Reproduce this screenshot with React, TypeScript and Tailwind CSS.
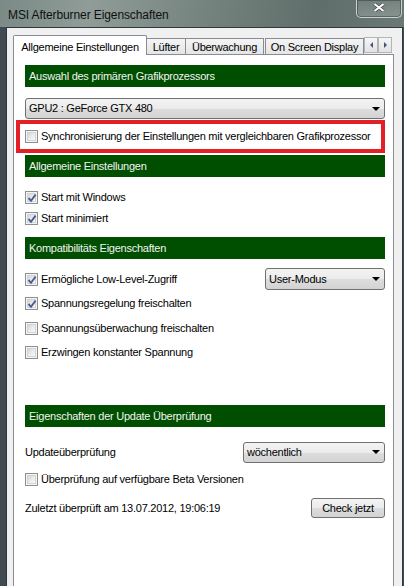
const font = "font-['Liberation_Sans',Arial,sans-serif]";

function Check({ checked = false }: { checked?: boolean }) {
  return (
    <span className="relative flex h-[13px] w-[13px] shrink-0 items-center justify-center border border-[#8e8f8f] bg-[#f4f4f4]">
      <span className="h-[9px] w-[9px] border border-[#d4d4d4] bg-[linear-gradient(135deg,#d2d5da_0%,#e9eaec_50%,#fbfbfb_100%)]" />
      {checked && (
        <svg className="absolute left-[1px] top-[1px]" width="10" height="10" viewBox="0 0 10 10" aria-hidden="true">
          <path d="M1.5 5 L4 7.8 L8.6 1.6" fill="none" stroke="#4a5e94" strokeWidth="1.9" />
        </svg>
      )}
    </span>
  );
}

function Header({ children, className = "" }: { children: string; className?: string }) {
  return (
    <div className={`flex h-[22px] items-center bg-[#004f00] pl-[4px] text-[#f2f4f2] ${className}`}>
      {children}
    </div>
  );
}

function Select({ value, className = "" }: { value: string; className?: string }) {
  return (
    <div
      className={`flex h-[21px] items-center justify-between rounded-[3px] border border-[#707070] bg-[linear-gradient(to_bottom,#f3f3f3_0%,#ebebeb_50%,#dddddd_51%,#d3d3d3_100%)] pl-[3px] pr-[4px] ${className}`}
    >
      <span>{value}</span>
      <svg width="8" height="4" viewBox="0 0 8 4" aria-hidden="true">
        <path d="M0 0 H8 L4 4 Z" fill="#000" />
      </svg>
    </div>
  );
}

function CheckRow({ label, checked, className = "" }: { label: string; checked?: boolean; className?: string }) {
  return (
    <div className={`flex h-[20px] items-center gap-[3px] ${className}`}>
      <Check checked={checked} />
      <span>{label}</span>
    </div>
  );
}

export default function App() {
  return (
    <div className={`${font} flex h-[586px] w-[404px] flex-col overflow-hidden bg-[#3f4a52] text-[11px] tracking-[-0.25px] text-black`}>
      <div className="flex h-[27px] shrink-0 items-start justify-between bg-[linear-gradient(100deg,#7b8a86_0%,#8f9c98_22%,#76847f_50%,#5f6e6a_78%,#6b7975_100%)] pl-[8px] pr-[2px]">
        <span className="mt-[6px] text-[12px] tracking-[-0.1px] text-[#101010]">MSI Afterburner Eigenschaften</span>
        <div className="flex h-[18px] w-[46px] items-start justify-center rounded-b-[5px] border border-t-0 border-[#c9d0ce] bg-[linear-gradient(to_bottom,rgba(255,255,255,0.08),rgba(255,255,255,0.2))] pt-[3px] shadow-[inset_0_0_0_1px_rgba(40,50,50,0.45)]">
          <svg width="12" height="9" viewBox="0 0 12 9" aria-hidden="true">
            <path d="M1.5 1 L10.5 8 M10.5 1 L1.5 8" stroke="#3a4444" strokeWidth="3.4" />
            <path d="M1.5 1 L10.5 8 M10.5 1 L1.5 8" stroke="#ffffff" strokeWidth="2.2" />
          </svg>
        </div>
      </div>

      <div className="ml-[6px] mr-[1px] flex flex-1 flex-col border border-b-0 border-[#2e3840] bg-[#f0f0f0] pl-[6px] pr-[8px] pt-[6px]">
        <div className="flex h-[21px] shrink-0">
          <div className="flex w-[351px] items-end overflow-hidden">
            <div className="relative z-10 -mb-px flex h-[21px] w-[134px] shrink-0 items-center justify-center rounded-t-[2px] border border-b-0 border-[#898c95] bg-white pt-[2px]">
              Allgemeine Einstellungen
            </div>
            <div className="flex h-[17px] w-[39px] shrink-0 items-center justify-center border-r border-t border-[#898c95] bg-[linear-gradient(to_bottom,#f4f4f4,#e4e4e4)]">
              Lüfter
            </div>
            <div className="flex h-[17px] w-[78px] shrink-0 items-center justify-center border-r border-t border-[#898c95] bg-[linear-gradient(to_bottom,#f4f4f4,#e4e4e4)]">
              Überwachung
            </div>
            <div className="ml-px flex h-[17px] w-[99px] shrink-0 items-center justify-center border border-b-0 border-[#898c95] bg-[linear-gradient(to_bottom,#f4f4f4,#e4e4e4)]">
              On Screen Display
            </div>
          </div>
          <div className="mt-[3px] flex h-[16px]">
            {["M3 0 V6 L0 3 Z", "M0 0 V6 L3 3 Z"].map((d) => (
              <div key={d} className="flex w-[14px] items-center justify-center border border-[#b2b4b8] bg-[linear-gradient(to_bottom,#f6f6f6,#e2e2e2)]">
                <svg width="3" height="6" viewBox="0 0 3 6" aria-hidden="true">
                  <path d={d} fill="#44567a" />
                </svg>
              </div>
            ))}
          </div>
        </div>

        <div className="-mt-px flex flex-1 flex-col border border-b-0 border-[#898c95] bg-white pl-[11px] pr-[8px] pt-[10px]">
          <Header>Auswahl des primären Grafikprozessors</Header>
          <Select value="GPU2 : GeForce GTX 480" className="mt-[11px] w-[360px]" />

          <div className="ml-[-9px] mt-[1px] flex h-[33px] w-[369px] items-center gap-[3px] border-4 border-[#e41f26] pl-[5px]">
            <Check />
            <span>Synchronisierung der Einstellungen mit vergleichbaren Grafikprozessor</span>
          </div>

          <Header className="mt-[2px]">Allgemeine Einstellungen</Header>
          <CheckRow label="Start mit Windows" checked className="mt-[10px]" />
          <CheckRow label="Start minimiert" checked className="mt-[1px]" />

          <Header className="mt-[9px]">Kompatibilitäts Eigenschaften</Header>
          <div className="mt-[9px] flex h-[22px] items-center justify-between">
            <div className="flex items-center gap-[3px]">
              <Check checked />
              <span>Ermögliche Low-Level-Zugriff</span>
            </div>
            <Select value="User-Modus" className="h-[22px] w-[120px]" />
          </div>
          <CheckRow label="Spannungsregelung freischalten" checked className="mt-[3px]" />
          <CheckRow label="Spannungsüberwachung freischalten" className="mt-[5px]" />
          <CheckRow label="Erzwingen konstanter Spannung" className="mt-[4px]" />

          <Header className="mt-[43px]">Eigenschaften der Update Überprüfung</Header>
          <div className="mt-[15px] flex h-[20px] items-center justify-between">
            <span>Updateüberprüfung</span>
            <Select value="wöchentlich" className="h-[21px] w-[142px]" />
          </div>
          <CheckRow label="Überprüfung auf verfügbare Beta Versionen" className="mt-[7px]" />
          <div className="mt-[9px] flex h-[20px] items-center justify-between">
            <span>Zuletzt überprüft am 13.07.2012, 19:06:19</span>
            <button className="flex h-[20px] w-[74px] items-center justify-center rounded-[3px] border border-[#707070] bg-[linear-gradient(to_bottom,#f3f3f3_0%,#ebebeb_50%,#dddddd_51%,#d3d3d3_100%)] tracking-[-0.25px]">
              Check jetzt
            </button>
          </div>
        </div>
      </div>
    </div>
  );
}
